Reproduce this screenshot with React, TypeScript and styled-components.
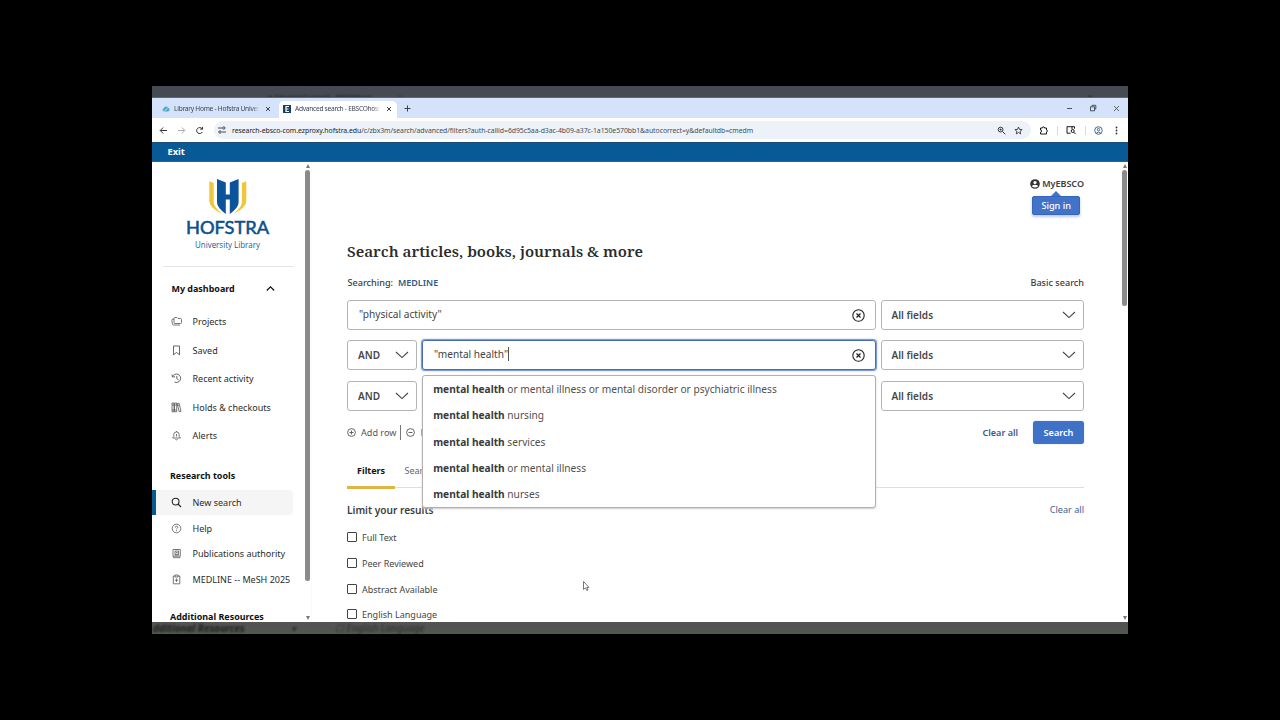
import React from 'react';
import styled, { createGlobalStyle } from 'styled-components';

const Global = createGlobalStyle`
  * { box-sizing: border-box; }
  body { margin: 0; background: #000; font-family: "Noto Sans", "Open Sans", sans-serif; }
`;

const Stage = styled.div`
  width: 1280px; height: 720px; background: #000; overflow: hidden;
  padding: 86px 152px 86px 152px;
`;
const Frame = styled.div`
  width: 976px; height: 548px; display: flex; flex-direction: column; overflow: hidden;
`;
const TopStrip = styled.div`
  height: 12px; flex: none; background: #464b53; border-bottom: 1px solid #5b6775; overflow: hidden;
  display: flex; padding: 7px 6px 0 116px; font-size: 7px; line-height: 9px; color: #23262b;
`;
const BottomStrip = styled.div`
  height: 12px; flex: none; background: linear-gradient(#525452 0 70%, #4c5f4a 95%); overflow: hidden;
  display: flex; padding-left: 1px; font-size: 9.9px; line-height: 12px; color: #1d1f1d;
`;
const Ghost = styled.span<{ $w: number; $bold?: boolean; $dim?: boolean }>`
  width: ${p => p.$w}px; flex: none; white-space: nowrap; filter: blur(1px); font-style: italic;
  font-weight: ${p => (p.$bold ? 700 : 400)}; opacity: ${p => (p.$dim ? 0.75 : 1)};
`;

const TabStrip = styled.div`
  height: 20px; flex: none; background: #d4e3f9; display: flex; align-items: flex-end; color: #3c4350;
`;
const Tab = styled.div<{ $active?: boolean }>`
  height: 17px; width: ${p => (p.$active ? 118 : 127)}px; padding-left: ${p => (p.$active ? 4 : 10)}px;
  background: ${p => (p.$active ? '#fff' : 'transparent')}; border-radius: 5px 5px 0 0;
  display: flex; align-items: center; padding-bottom: 1px;
`;
const TabTitle = styled.span<{ $sp: number }>`
  width: 85px; margin-left: 4px; overflow: hidden; white-space: nowrap; font-size: 6.6px; line-height: 12px;
  letter-spacing: ${p => p.$sp}px; mask-image: linear-gradient(90deg, #000 92%, transparent);
`;
const TabClose = styled.span`display: flex; margin-left: 6px;`;
const NewTab = styled.span`display: flex; width: 7px; margin: 0 0 6px 7px;`;
const WinControls = styled.div`
  margin-left: auto; display: flex; align-items: center; gap: 16px; padding: 0 8px 6px 0;
`;

const AddressBar = styled.div`
  height: 24px; flex: none; background: #fff; display: flex; align-items: center; padding-left: 7px;
`;
const NavIcons = styled.div`display: flex; gap: 9px; width: 55px;`;
const UrlField = styled.div`
  width: 817px; height: 18px; border-radius: 9px; background: #edf2f8; display: flex; align-items: center;
  padding: 0 8px 0 4px; color: #33383f;
`;
const UrlText = styled.span`
  margin-left: 6px; font-size: 6.9px; letter-spacing: -0.054px; white-space: nowrap; flex: 1; color: #474d54;
  b { font-weight: 400; color: #1d2126; }
`;
const FieldIcons = styled.div`display: flex; gap: 8px;`;
const ToolIcons = styled.div`
  flex: 1; display: flex; align-items: center; justify-content: space-between; padding: 0 7px 0 8px;
`;
const Divider = styled.span`width: 1px; height: 9px; background: #d5dbe2;`;

const ExitBar = styled.div`
  height: 20px; flex: none; background: #085a96; border-top: 1px solid #1c4a74; border-bottom: 1px solid #2c668d;
  color: #fff; font-size: 9.3px; font-weight: 700; line-height: 18px; padding-left: 15.5px;
`;

const Content = styled.div`height: 460px; flex: none; background: #fff; display: flex; overflow: hidden;`;
const Sidebar = styled.aside`width: 152px; overflow: hidden; color: #2b2b2b; flex: none;`;
const LogoWrap = styled.div`height: 105px; margin: 0 10px 0 11px; border-bottom: 1px solid #e6e6e6;`;
const SideHead = styled.div<{ $h: number; $top?: number; $left?: number }>`
  height: ${p => p.$h}px; display: flex; align-items: center; justify-content: space-between;
  padding: ${p => p.$top ?? 0}px 29px 0 ${p => p.$left ?? 18}px; font-size: 8.95px; font-weight: 700; color: #111; white-space: nowrap;
`;
const SideItem = styled.div<{ $h: number; $active?: boolean }>`
  height: ${p => p.$h}px; display: flex; align-items: center; margin-right: 11px;
  padding-left: ${p => (p.$active ? 15 : 19)}px; font-size: 9.03px; white-space: nowrap;
  border-left: ${p => (p.$active ? '4px solid #085a8e' : '0')};
  background: ${p => (p.$active ? '#f5f5f5' : 'transparent')}; border-radius: ${p => (p.$active ? '0 4px 4px 0' : 0)};
`;
const SideIcon = styled.span`width: 21.5px; display: flex; flex: none; color: #555;`;
const ScrollTrack = styled.div`
  width: 7px; flex: none; display: flex; flex-direction: column; align-items: center; padding: 2px 0;
  background: #fff;
`;
const Thumb = styled.div<{ $h: number }>`
  width: 5px; height: ${p => p.$h}px; border-radius: 2.5px; background: #8a8a8a; margin-top: 2px;
`;
const Arrow = styled.i<{ $down?: boolean }>`
  border: 2.5px solid transparent; margin-top: ${p => (p.$down ? 'auto' : 0)};
  ${p => (p.$down ? 'border-top: 4px solid #777; border-bottom: 0;' : 'border-bottom: 4px solid #777; border-top: 0;')}
`;

const Main = styled.main`
  flex: 1; position: relative; padding: 0 35px 0 35px; border-left: 1px solid #fafafa; color: #3c3c3c;
  display: flex; flex-direction: column; margin-right: 2px;
`;
const Account = styled.div`
  height: 78px; padding-top: 15px; display: flex; flex-direction: column; align-items: flex-end; flex: none;
`;
const AccountName = styled.div`
  display: flex; align-items: center; gap: 2.5px; font-size: 9px; font-weight: 600; line-height: 14px; height: 14px;
`;
const Pointer = styled.i`
  border: 5px solid transparent; border-top: 0; border-bottom-color: #4273c9; margin-right: 23px;
`;
const SignIn = styled.button`
  width: 48px; height: 19px; margin-right: 3.8px; border: 1px solid #3565bd; border-radius: 2px; background: #4273c9;
  color: #fff; font: 500 9.2px/17px "Noto Sans", sans-serif; padding: 0; box-shadow: 0 2px 3px #b9c9e6;
`;
const Heading = styled.h1`
  margin: 0; height: 23px; font: 600 15.28px/23px "Noto Serif", "DejaVu Serif Condensed", "DejaVu Serif", serif;
  color: #2c2c2c; white-space: nowrap; flex: none;
`;
const SearchInfo = styled.div`
  height: 37px; flex: none; display: flex; align-items: center; font-size: 9.1px; font-weight: 500; padding: 1px 0 0 0.5px;
`;
const DbName = styled.span`color: #2f5a8a; font-weight: 600; margin-left: 5px; font-size: 8.95px;`;
const BasicLink = styled.span`margin-left: auto; font-weight: 500;`;

const SearchRow = styled.div`display: flex; gap: 5px; height: 30px; margin-bottom: 10.4px; flex: none;`;
const Select = styled.div<{ $w: number }>`
  width: ${p => p.$w}px; border: 1px solid #b4b4b4; border-radius: 3px; display: flex; align-items: center;
  justify-content: space-between; padding: 0 7px 0 ${p => (p.$w > 100 ? 9.5 : 10)}px; font-size: 10.05px; font-weight: 600; color: #484848;
`;
const Query = styled.div<{ $focus?: boolean }>`
  flex: 1; border-radius: 3px; display: flex; align-items: center; justify-content: space-between;
  border: 1px solid ${p => (p.$focus ? '#4a6ca8' : '#b4b4b4')};
  box-shadow: ${p => (p.$focus ? '0 0 0 1px #7b9dd6, 0 0 2px 1px #a9c7f2' : 'none')};
  padding: 0 10px 0 11px; font-size: 10.15px; color: #444;
`;
const QueryText = styled.span<{ $caret?: boolean }>`
  margin-top: -3px; line-height: 14px; border-right: ${p => (p.$caret ? '1px solid #555' : '0')};
`;
const Actions = styled.div`
  height: 23px; margin-top: 0; flex: none; display: flex; align-items: center; font-size: 9.1px; color: #555; white-space: nowrap;
  svg { margin-right: 5px; }
`;
const Bar = styled.i`width: 1px; height: 15px; background: #777; margin: 0 5px 0 4px;`;
const ClearAll = styled.span`margin-left: auto; color: #3a588c; font-weight: 600; font-size: 9px;`;
const SearchButton = styled.button`
  width: 51px; height: 23px; margin-left: 15px; border: 0; border-radius: 3px; background: #3f71c7; color: #fff;
  font: 600 9.1px "Noto Sans", sans-serif; padding: 0; box-shadow: 0 0 1px #6c9bea;
`;
const Tabs = styled.div`
  height: 43.9px; flex: none; display: flex; border-bottom: 1px solid #dedede; font-size: 9px; padding-top: 10.6px;
`;
const FilterTab = styled.div<{ $active?: boolean }>`
  height: 34px; padding: 0 10px; display: flex; align-items: center; color: ${p => (p.$active ? '#111' : '#666')};
  font-weight: ${p => (p.$active ? 700 : 400)}; border-bottom: ${p => (p.$active ? '3px solid #dfb643' : '0')};
  padding-bottom: ${p => (p.$active ? 0 : 3)}px; width: ${p => (p.$active ? '47.5px' : 'auto')}; white-space: nowrap;
`;
const LimitRow = styled.div`
  height: 37px; flex: none; display: flex; align-items: center; justify-content: space-between; padding-top: 6px;
  font-size: 10.15px; font-weight: 600;
`;
const ClearFilters = styled.span`font-size: 9.1px; font-weight: 400; color: #3b6390;`;
const CheckRow = styled.label`
  height: 25.6px; flex: none; display: flex; align-items: center; gap: 5px; font-size: 9.03px; color: #444;
`;
const Box = styled.i`width: 10px; height: 10px; border: 1px solid #444; border-radius: 1px; margin-bottom: 1px;`;

const Suggestions = styled.div`
  position: absolute; left: 110px; top: 213px; width: 454px; height: 133px; background: #fff; border: 1px solid #b0b0b0;
  border-radius: 3px; box-shadow: 0 1px 2px #ccc; font-size: 10.17px; color: #505050;
`;
const Suggestion = styled.div`
  height: 26.35px; padding-left: 10.2px; line-height: 26.4px; white-space: nowrap;
  b { color: #3a3a3a; font-weight: 700; }
`;
const Cursor = styled.svg`position: absolute; left: 270px; top: 418px;`;

const Svg = ({ s = 10, w = 1, vb = 10, children }: { s?: number; w?: number; vb?: number; children: React.ReactNode }) => (
  <svg width={s} height={s} viewBox={`0 0 ${vb} ${vb}`} fill="none" stroke="currentColor" strokeWidth={w} style={{ flex: 'none' }}>
    {children}
  </svg>
);
const Cross = () => <Svg s={6} vb={6}><path d="M1 1l4 4M5 1L1 5" /></Svg>;
const Chevron = () => (
  <svg width="14" height="8" viewBox="0 0 14 8" fill="none" stroke="#444" strokeWidth="1.1"><path d="M1 1l6 5.6L13 1" /></svg>
);
const ClearIcon = () => (
  <Svg s={13} vb={13} w={1.1}><g stroke="#222"><circle cx="6.5" cy="6.5" r="5.7" /><path d="M4.5 4.5l4 4M8.5 4.5l-4 4" strokeWidth="1.3" /></g></Svg>
);

const Logo = () => (
  <svg width="131" height="104" viewBox="163 162 131 104">
    <g fill="#f0c73c">
      <path d="M209.3 181.2l4.4 1.800v19q0 5 8.300 11.700-12.700-6-12.700-12.500z" />
      <path d="M246.300 181.200l-4.400 1.800v19q0 5-8.300 11.700 12.700-6 12.700-12.500z" />
    </g>
    <path fill="#0b539b" d="M217 179l8.800 3.600v12h4v-12l8.800-3.600v23.500q0 5-8.800 11.500v-14.500h-4v14.500q-8.800-6.500-8.800-11.500z" />
    <text x="186" y="234.200" textLength="83" lengthAdjust="spacingAndGlyphs" fontFamily="Lato" fontSize="17.600" fontWeight="400" fill="#0b4f8e" stroke="#0b4f8e" strokeWidth=".55">HOFSTRA</text>
    <text x="195" y="248" textLength="65" lengthAdjust="spacingAndGlyphs" fontFamily="Open Sans" fontSize="8.800" fill="#175a92">University Library</text>
  </svg>
);

const icons: Record<string, React.ReactNode> = {
  Projects: <Svg s={11} vb={11} w={0.8}><path d="M3 2.500q0-1 1-1h2l1 1h2.500q1 0 1 1v3q0 1-1 1H4q-1 0-1-1zM3 3.300H1.500q-.7 0-.7 1l.7 4q.1.700 1 .7H9" /></Svg>,
  Saved: <Svg s={11} vb={11} w={0.9}><path d="M2.500 1h6v8.800l-3-2.300-3 2.300z" /></Svg>,
  'Recent activity': <Svg s={11} vb={11} w={0.9}><path d="M1.500 3.800A4.200 4.200 0 1 1 3.500 9M1 1.500l.5 2.500 2.500-.3M5.800 3v2.700l1.700 1" /></Svg>,
  'Holds & checkouts': <Svg s={11} vb={11} w={0.8}><path d="M1 1h2v8.800H1zM3.500 1h2.200v8.800H3.500zM6.200 1.500l1.800-.4L10 9.300l-1.800.5zM1 3h4.700M1 8h4.700M6.600 3.500l1.800-.4" /></Svg>,
  Alerts: <Svg s={11} vb={11} w={0.8}><path d="M1.500 8h8L8.200 6.500V4.600a2.700 2.700 0 0 0-5.400 0v1.900zM4.300 9.300q1.200 1.200 2.400 0M5.500 1v1M5.500 4v2.500" /></Svg>,
  'New search': <Svg s={11} vb={11} w={1.100}><g stroke="#222"><circle cx="4.600" cy="4.600" r="3.400" /><path d="M7 7l3 3" /></g></Svg>,
  Help: <Svg s={11} vb={11} w={0.8}><circle cx="5.500" cy="5.500" r="4.300" /><path d="M4.200 4.600q0-1.300 1.300-1.300t1.300 1.100q0 .6-.7 1t-.6.900M5.500 7.200v.9" /></Svg>,
  'Publications authority': <Svg s={11} vb={11} w={0.8}><path d="M2 8.500V1.500h7.300v6.700H2.500q-.8.900.2 1.500h6.800M4 3h3.500v3.300H4zM5 4.500h1.500M3.500 7h4.500" /></Svg>,
  'MEDLINE -- MeSH 2025': <Svg s={11} vb={11} w={0.8}><path d="M4 2H2.300v7.800h6.500V2H7M4 1h3v2H4zM5.500 4.500v3.400M3.800 6.200h3.400" /></Svg>,
};

const dashboard = ['Projects', 'Saved', 'Recent activity', 'Holds & checkouts', 'Alerts'];
const tools = ['New search', 'Help', 'Publications authority', 'MEDLINE -- MeSH 2025'];
const suggestions = ['or mental illness or mental disorder or psychiatric illness', 'nursing', 'services', 'or mental illness', 'nurses'];
const filters = ['Full Text', 'Peer Reviewed', 'Abstract Available', 'English Language'];

const FieldSelect = () => <Select $w={203}>All fields<Chevron /></Select>;
const Operator = () => <Select $w={70}>AND<Chevron /></Select>;

export default function App() {
  return (
    <Stage>
      <Global />
      <Frame>
        <TopStrip>
          <Ghost $w={130} $bold>■ Advanced search - EBSCOhost</Ghost>
          <Ghost $w={690}>×</Ghost>
          <Ghost $w={10}>■</Ghost>
        </TopStrip>
        <TabStrip>
          <Tab>
            <svg width="8" height="8" viewBox="0 0 8 8"><path d="M2 6.500a1.700 1.700 0 0 1-.2-3.300A2.300 2.300 0 0 1 6 2.800a1.900 1.900 0 0 1 .2 3.700z" fill="#4fa9c9" /><path d="M2 6.500L5.500 3" stroke="#b9e2ee" /></svg>
            <TabTitle $sp={-0.25}>Library Home - Hofstra University</TabTitle>
            <TabClose><Cross /></TabClose>
          </Tab>
          <Tab $active>
            <svg width="8" height="8" viewBox="0 0 8 8"><path d="M0 0h8v8H0z" fill="#173f66" /><path d="M6 1.500H3v5h3M3 4h2.500" stroke="#fff" fill="none" strokeWidth="1.200" /></svg>
            <TabTitle $sp={-0.27}>Advanced search - EBSCOhost Research</TabTitle>
            <TabClose><Cross /></TabClose>
          </Tab>
          <NewTab><Svg s={7} vb={7}><path d="M3.500.5v6M.5 3.500h6" /></Svg></NewTab>
          <WinControls>
            <Svg s={7} vb={7} w={0.9}><path d="M1 3.500h5" /></Svg>
            <Svg s={8} vb={8} w={0.9}><path d="M1.500 2.800h4v4h-4zM3 2.500V1.300h3.800V5H6" /></Svg>
            <Svg s={7} vb={7} w={0.8}><path d="M1 1l5 5M6 1L1 6" /></Svg>
          </WinControls>
        </TabStrip>
        <AddressBar>
          <NavIcons>
            <Svg s={9} vb={9}><path d="M8 4.500H1.500M4.200 1.500l-3 3 3 3" stroke="#333" /></Svg>
            <Svg s={9} vb={9}><path d="M1 4.500h6.500M4.800 1.500l3 3-3 3" stroke="#aaa" /></Svg>
            <Svg s={9} vb={9}><path d="M7.300 6A3 3 0 1 1 7 2.700M7.500.9v2.300H5.300" stroke="#333" /></Svg>
          </NavIcons>
          <UrlField>
            <Svg s={8} vb={8} w={0.9}><path d="M0 2h4M4 6h4" /><circle cx="5.800" cy="2" r="1.200" /><circle cx="2" cy="6" r="1.200" /></Svg>
            <UrlText><b>research-ebsco-com.ezproxy.hofstra.edu</b>/c/zbx3m/search/advanced/filters?auth-callid=6d95c5aa-d3ac-4b09-a37c-1a150e570bb1&amp;autocorrect=y&amp;defaultdb=cmedm</UrlText>
            <FieldIcons>
              <Svg s={9} vb={9}><circle cx="3.600" cy="3.600" r="2.400" /><path d="M5.500 5.500l2.800 2.800M2.600 3.600h2M3.600 2.600v2" /></Svg>
              <Svg s={9} vb={9} w={0.9}><path d="M4.500 1l1 2.400 2.600.2-2 1.700.6 2.600-2.200-1.400-2.200 1.400.6-2.600-2-1.700 2.600-.2z" /></Svg>
            </FieldIcons>
          </UrlField>
          <ToolIcons>
            <Svg s={9} vb={9} w={0.9}><path d="M1.500 2h2q0-1.200 1-1.200t1 1.200h2v2q.9 0 .9 1t-.9 1v2h-6V6.200q1.200-.2 1.200-1.200t-1.200-1z" /></Svg>
            <Divider />
            <Svg s={10} vb={10} w={0.9}><path d="M4.500 8.200H1v-6.500h7.500v2M6 1.700v2.500" /><circle cx="6.700" cy="6" r="1.500" /><path d="M7.800 7.200L9.500 9" /></Svg>
            <Divider />
            <Svg s={9} vb={9} w={0.9}><g stroke="#2a5f8d"><circle cx="4.500" cy="4.500" r="3.800" /><circle cx="4.500" cy="3.600" r="1.200" /><path d="M2.300 7q2.200-2 4.400 0" /></g></Svg>
            <Svg s={9} vb={9} w={0}><g fill="#333"><circle cx="4.500" cy="1.500" r=".9" /><circle cx="4.500" cy="4.500" r=".9" /><circle cx="4.500" cy="7.500" r=".9" /></g></Svg>
          </ToolIcons>
        </AddressBar>
        <ExitBar>Exit</ExitBar>
        <Content>
          <Sidebar>
            <LogoWrap><Logo /></LogoWrap>
            <SideHead $h={40.200} $top={3} $left={19.5}>My dashboard<Svg s={9} vb={9} w={1.200}><path d="M.8 6.500l3.700-3.700 3.700 3.700" stroke="#111" /></Svg></SideHead>
            {dashboard.map(t => <SideItem key={t} $h={28.55}><SideIcon>{icons[t]}</SideIcon>{t}</SideItem>)}
            <SideHead $h={40} $top={10.5}>Research tools</SideHead>
            {tools.map((t, i) => <SideItem key={t} $h={25.500} $active={i === 0}><SideIcon>{icons[t]}</SideIcon>{t}</SideItem>)}
            <SideHead $h={50}>Additional Resources</SideHead>
          </Sidebar>
          <ScrollTrack><Arrow /><Thumb $h={411} /><Arrow $down /></ScrollTrack>
          <Main>
            <Account>
              <AccountName>
                <svg width="10" height="10" viewBox="0 0 10 10"><circle cx="5" cy="5" r="4.800" fill="#333" /><circle cx="5" cy="3.500" r="1.600" fill="#fff" /><path d="M2 7.500q0-1.700 3-1.700t3 1.700q-3 2-6 0" fill="#fff" /></svg>
                MyEBSCO
              </AccountName>
              <Pointer />
              <SignIn>Sign in</SignIn>
            </Account>
            <Heading>Search articles, books, journals &amp; more</Heading>
            <SearchInfo>Searching:<DbName>MEDLINE</DbName><BasicLink>Basic search</BasicLink></SearchInfo>
            <SearchRow><Query><QueryText>"physical activity"</QueryText><ClearIcon /></Query><FieldSelect /></SearchRow>
            <SearchRow><Operator /><Query $focus><QueryText $caret>"mental health"</QueryText><ClearIcon /></Query><FieldSelect /></SearchRow>
            <SearchRow><Operator /><Query /><FieldSelect /></SearchRow>
            <Actions>
              <Svg s={9} vb={9} w={0.9}><circle cx="4.500" cy="4.500" r="3.900" /><path d="M4.500 2.500v4M2.500 4.500h4" /></Svg>Add row
              <Bar />
              <Svg s={9} vb={9} w={0.9}><circle cx="4.500" cy="4.500" r="3.900" /><path d="M2.500 4.500h4" /></Svg>Remove row
              <ClearAll>Clear all</ClearAll>
              <SearchButton>Search</SearchButton>
            </Actions>
            <Tabs><FilterTab $active>Filters</FilterTab><FilterTab>Search options</FilterTab></Tabs>
            <LimitRow>Limit your results<ClearFilters>Clear all</ClearFilters></LimitRow>
            {filters.map(f => <CheckRow key={f}><Box />{f}</CheckRow>)}
            <Suggestions>
              {suggestions.map(s => <Suggestion key={s}><b>mental health</b> {s}</Suggestion>)}
            </Suggestions>
            <Cursor width="8" height="12" viewBox="0 0 8 12"><path d="M1.500 1.500v8l2-1.700 1.300 2.700 1.200-.6-1.200-2.500h2.200z" fill="#fff" stroke="#555" strokeWidth=".8" /></Cursor>
          </Main>
          <ScrollTrack><Arrow /><Thumb $h={136} /><Arrow $down /></ScrollTrack>
        </Content>
        <BottomStrip>
          <Ghost $w={138} $bold>dditional Resources</Ghost>
          <Ghost $w={44} $dim>▾</Ghost>
          <Ghost $w={200} $dim>☐ English Language</Ghost>
        </BottomStrip>
      </Frame>
    </Stage>
  );
}
